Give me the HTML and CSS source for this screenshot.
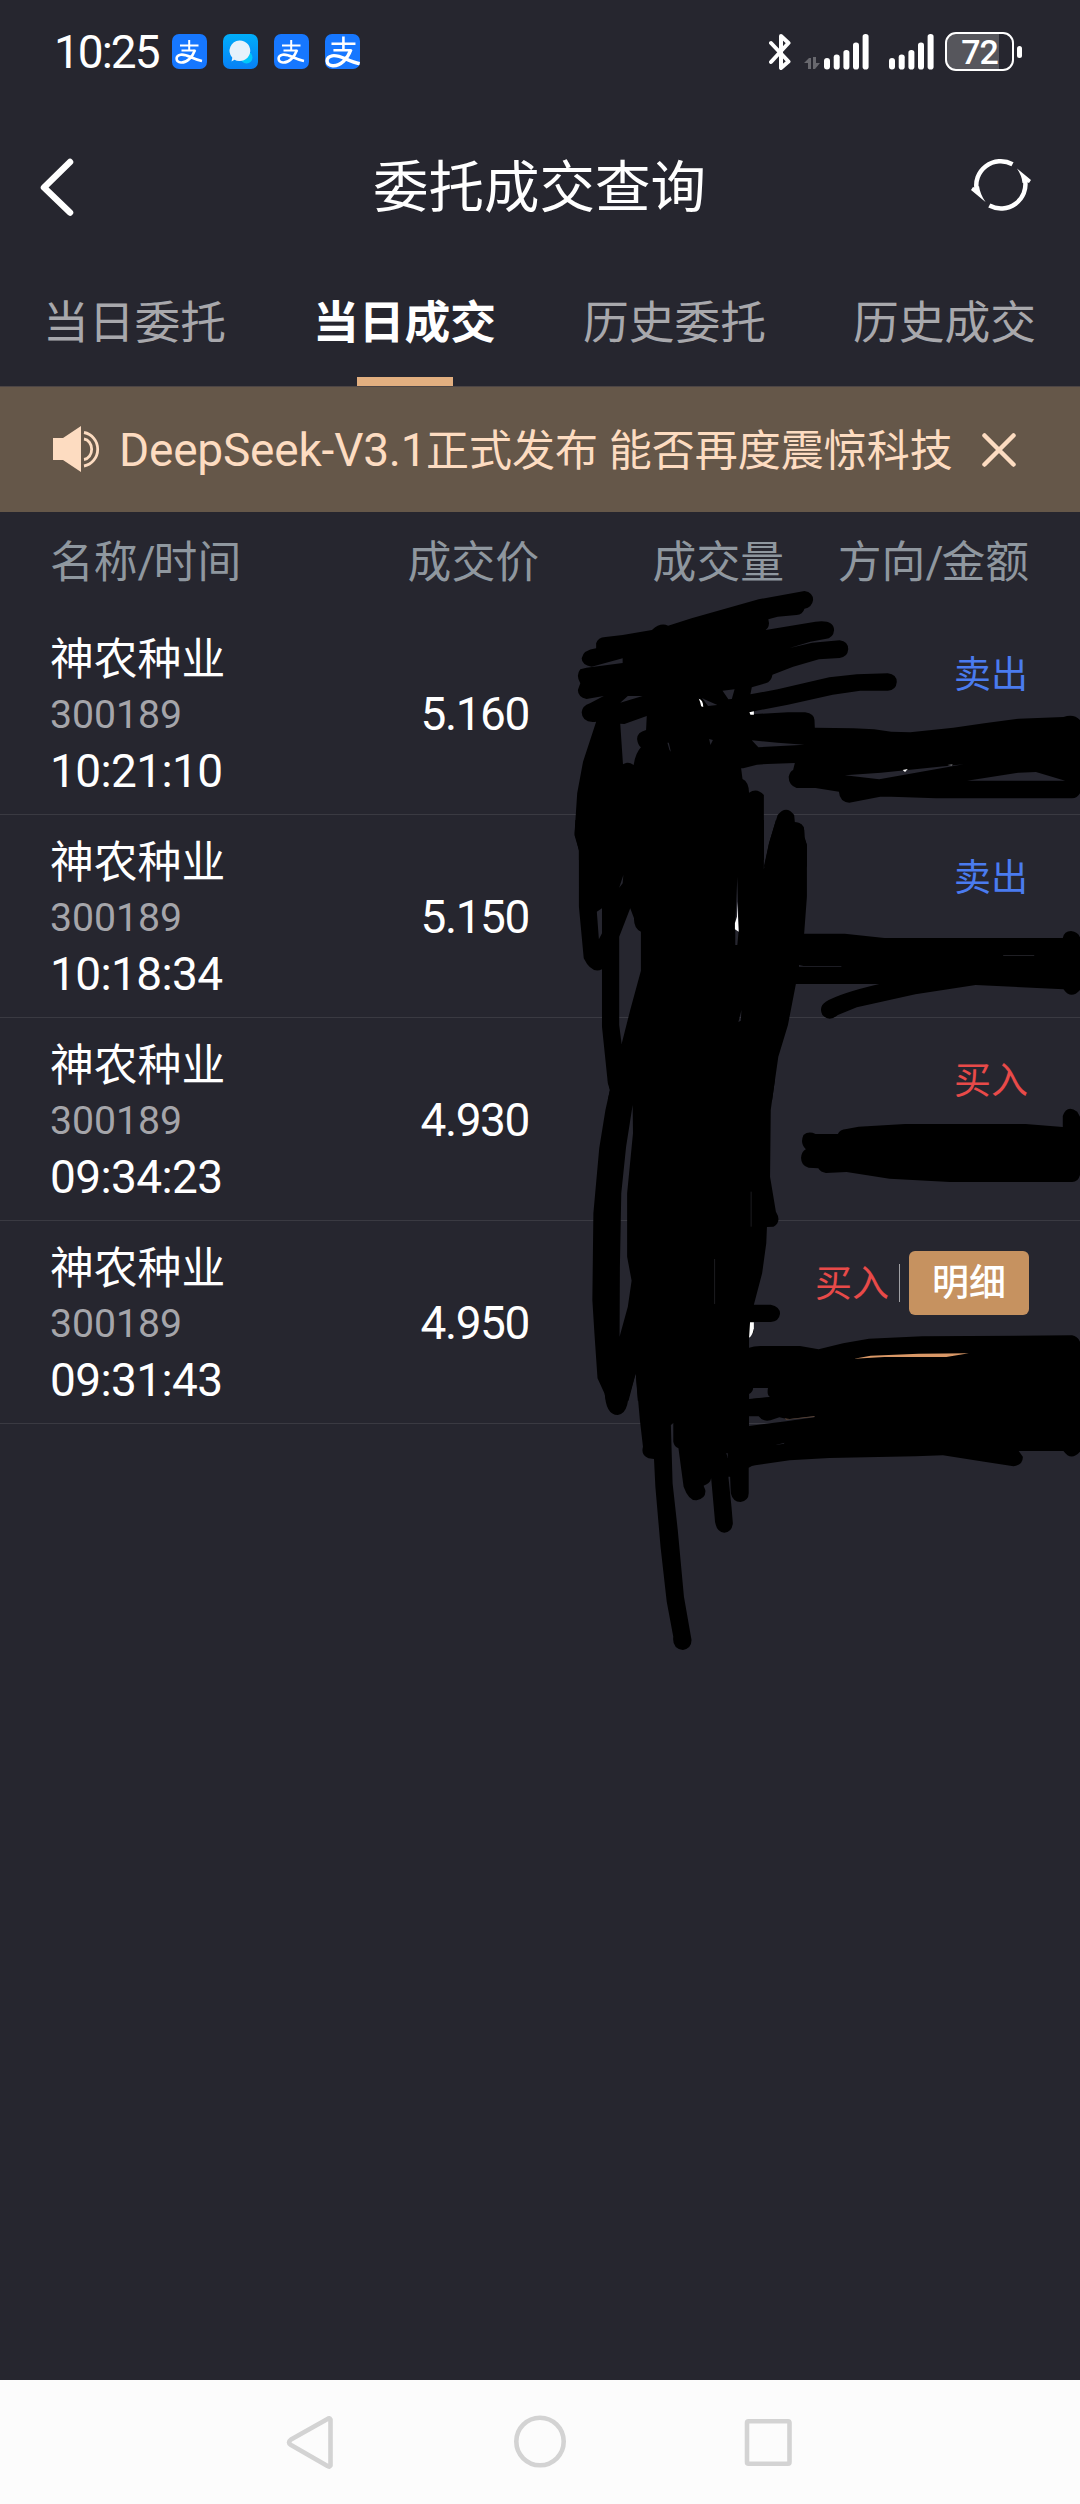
FILE: index.html
```html
<!DOCTYPE html>
<html lang="zh-CN">
<head>
<meta charset="utf-8">
<title>委托成交查询</title>
<link rel="stylesheet" href="styles.css">
</head>
<body>
<svg class="defs" width="0" height="0">
  <symbol id="alipay" viewBox="0 0 35 35">
    <g fill="none" stroke="#fff" stroke-linecap="butt">
      <path stroke-width="2" d="M8 11.500H26.500M17.200 6v10M9.500 16.500h14"/>
      <path stroke-width="2.600" d="M23 16C20.500 23 15 28.800 9 28.500C3.500 28 3 22 8.500 20.800C14.500 19.500 20 25 30 27"/>
    </g>
  </symbol>
  <symbol id="signal" viewBox="0 0 45 36">
    <g fill="#fff"><rect y="24" width="6" height="11.500" rx="3"/><rect x="9.700" y="20.500" width="6" height="15" rx="2.800"/><rect x="19.400" y="16" width="6" height="19.500" rx="2.800"/><rect x="29" y="8.500" width="6" height="27" rx="2.800"/><rect x="38.600" y="0" width="6" height="35.500" rx="2.800"/></g>
  </symbol>
</svg>
<div class="screen">
  <header class="status">
    <span class="clock">10:25</span>
    <div class="apps">
      <svg class="app blue" viewBox="0 0 35 35"><use href="#alipay"/></svg>
      <svg class="app chat" viewBox="0 0 35 35"><circle cx="23.500" cy="23.500" r="6" fill="#00c8fa"/><path fill="#e6f2fb" d="M16.500 6.500a10.500 10.300 0 1 1-5 19.200L8.500 27.500l.8-3.800A10.500 10.300 0 0 1 16.500 6.500z"/></svg>
      <svg class="app blue" viewBox="0 0 35 35"><use href="#alipay"/></svg>
      <svg class="app blue" viewBox="3 4 27 27"><use href="#alipay" width="35" height="35"/></svg>
    </div>
    <div class="indicators">
      <svg class="bt" viewBox="0 0 22 36"><path fill="none" stroke="#fff" stroke-width="4" stroke-linejoin="round" stroke-linecap="round" d="M2 9l17.500 18.500-7.500 6.500V2l7.500 7L2 28"/></svg>
      <svg class="data" viewBox="0 0 16 12"><path fill="#68686e" d="M0 6l5-5h2v11H4V6zM16 6l-5 6H9V0h3v6z"/></svg>
      <svg class="bars first"><use href="#signal"/></svg>
      <svg class="bars second"><use href="#signal"/></svg>
      <div class="battery"><span>72</span></div>
      <i class="nub"></i>
    </div>
  </header>

  <nav class="titlebar">
    <svg class="back" viewBox="0 0 36 60"><path fill="none" stroke="#fff" stroke-width="6.500" stroke-linecap="round" stroke-linejoin="round" d="M31 5L5 30.500 31 55.500"/></svg>
    <h1>委托成交查询</h1>
    <svg class="refresh" viewBox="0 0 60 54"><g fill="none" stroke="#fff" stroke-width="4.500"><path d="M41.500 5.200A24.500 24 0 0 0 6 32"/><path d="M18.300 46.600A24.500 24 0 0 0 54 21"/></g><path fill="#fff" d="M46 9.500L60 21l-2 3-2.500-1-4 1Q51 17 46 9.500zM14.500 43L0 31l2-3 2.500 1L8 27Q9 35 14.500 43z"/></svg>
  </nav>

  <div class="tabs">
    <span>当日委托</span><span class="active">当日成交</span><span>历史委托</span><span>历史成交</span>
  </div>

  <div class="notice">
    <svg class="horn" viewBox="0 0 47 46"><path fill="#fddcc1" d="M0 12h10L28 0v46L10 34H0z"/><path fill="none" stroke="#fddcc1" stroke-width="2.800" d="M31 6.500a16.500 17 0 0 1 0 33.500M31 13a8.500 10.300 0 0 1 0 20.500"/></svg>
    <p><span class="latin">DeepSeek-V3.1</span>正式发布 能否再度震惊科技</p>
    <svg class="close" viewBox="0 0 34 34"><path fill="none" stroke="#fddcc1" stroke-width="4.500" stroke-linecap="round" d="M2.500 2.500l29 29M31.500 2.500l-29 29"/></svg>
  </div>

  <div class="grid head">
    <span>名称<b>/</b>时间</span><span class="num">成交价</span><span class="num">成交量</span><span class="num">方向<b>/</b>金额</span>
  </div>

  <main class="deals">
    <div class="grid row">
      <div class="stock"><span>神农种业</span><span class="code">300189</span><span class="time">10:21:10</span></div>
      <span class="num price">5.160</span><span></span>
      <div class="side"><span class="sell">卖出</span></div>
    </div>
    <div class="grid row">
      <div class="stock"><span>神农种业</span><span class="code">300189</span><span class="time">10:18:34</span></div>
      <span class="num price">5.150</span><span></span>
      <div class="side"><span class="sell">卖出</span></div>
    </div>
    <div class="grid row">
      <div class="stock"><span>神农种业</span><span class="code">300189</span><span class="time">09:34:23</span></div>
      <span class="num price">4.930</span><span></span>
      <div class="side"><span class="buy">买入</span></div>
    </div>
    <div class="grid row">
      <div class="stock"><span>神农种业</span><span class="code">300189</span><span class="time">09:31:43</span></div>
      <span class="num price">4.950</span><span></span>
      <div class="side"><span class="buy">买入</span><i class="rule"></i><button class="detail">明细</button></div>
    </div>
  </main>

  <footer class="sysnav">
    <svg viewBox="0 0 60 60"><path fill="none" stroke="#d3d3d3" stroke-width="4.600" stroke-linejoin="round" d="M48.500 7.500v46q-1 2-3 .5L9 33q-4-2.500 0-5.500L45.500 7q2-1.500 3 .5z"/></svg>
    <svg viewBox="0 0 60 60"><circle cx="30" cy="29.500" r="23.700" fill="none" stroke="#d3d3d3" stroke-width="4.600"/></svg>
    <svg viewBox="0 0 60 60"><rect x="9" y="9.300" width="42.500" height="42.500" rx="1.500" fill="none" stroke="#d3d3d3" stroke-width="4.600"/></svg>
  </footer>

  <!-- black marker hiding volumes and amounts -->
  <svg class="marker" viewBox="0 0 1080 2504">
    <g transform="translate(540 580) scale(.34439 .33333)">
      <path fill-rule="evenodd" d="M163 190Q168 172 190 171L240 165 325 150Q350 126 372 137L440 115 635 58 768 33Q793 37 793 60Q790 82 768 86Q763 103 745 105L690 110 663 118 665 130Q664 145 655 150L800 125Q853 118 854 150Q852 175 828 177L785 185 725 204 790 188 870 181Q895 184 895 208Q893 232 870 234L810 238 735 260 675 284Q672 304 655 310L615 322 611 343 690 328 840 292 920 283 1010 280Q1036 284 1036 306Q1034 331 1010 332L930 332 850 344 720 374 625 393 610 403 720 397 770 397Q797 402 797 420L798 443 910 445 970 448 1020 455 1075 457 1200 443 1290 430 1390 416 1520 411Q1550 400 1568 420V640Q1560 655 1545 655H1150L1020 650H988L898 668Q870 665 868 635L800 624H745Q722 615 722 590Q727 572 735 570L740 549 660 552 630 554 590 565 584 565 588 597Q606 605 607 638Q630 622 650 645V840H113V810L100 765 108 640 125 545 163 425Q122 430 121 397Q122 378 145 370L185 348 135 357Q110 351 110 330L117 310Q103 286 117 268L135 263 240 249V235L150 260Q121 255 121 235Q125 210 163 205z
      M233 368L255 348H298zM233 431L245 432 310 408 308 450Q281 457 282 478Q284 495 293 502Q277 520 272 555Q255 543 241 553zM530 332L565 328 557 357 547 358zM470 354L482 360 515 375 488 378zM615 481L690 488 768 494 634 502zM885 586L990 578 1230 553 985 598zM1240 602L1390 578 1440 576 1525 602zM370 488L374 488 380 515 376 510zM491 477L502 480 495 495z"/>
      <path d="M650 860L665 790 690 705Q715 673 738 705L740 727Q765 730 767 750L768 770 775 795V860z"/>
      <path fill="#fff" d="M461 356Q474 360 474 381L468 379Q466 365 461 356zM608 397L621 394V404H611zM1053 570L1068 567 1060 576z"/>
      <path fill="#77777b" d="M1183 555L1198 553 1196 557z"/>
    </g>
    <g transform="translate(540 820) scale(.34439 .33333)">
      <path fill-rule="evenodd" d="M103 0H650V148L665 70 685 0 740 7Q765 7 767 30L768 55 775 75V230L767 341H885L1000 354H1518Q1522 333 1542 333Q1562 335 1568 352V510Q1542 540 1520 508L1265 495 1090 523 920 562 865 585Q840 607 820 585Q808 560 830 545Q870 520 985 492H743L720 615 692 710 674 840H197L203 810 197 790 180 620V448Q150 463 127 415L113 260V92L101 40z
      M165 275L180 265V340L171 358zM262 265L273 295Q272 325 293 335V452L262 570 237 672 230 615V350zM573 170L577 330 573 375H567V315zM585 570L583 602 576 606zM752 435L765 438H875V440H752zM242 165L240 190 230 203z"/>
      <path fill="#fff" d="M573 245L577 335 566 328V310L572 290z"/>
      <path fill="#303037" d="M1345 405H1435V407H1345z"/>
    </g>
    <g transform="translate(540 1080) scale(.34439 .33333)">
      <path fill-rule="evenodd" d="M197 0H682L670 90 668 290 685 395Q703 425 678 440L659 441 657 490 645 580 621 674H670Q697 680 697 701Q694 724 670 726H621V755L607 773V803Q620 798 640 798H755L809 808 880 790 955 776 1110 769 1545 766Q1560 768 1568 785V962H192L187 940 167 895 158 760 152 660 155 400 172 205 190 90 203 30z
      M269 75L270 160 253 340V530L266 602 255 680 231 770 232 560 236 340 250 200zM278 880L284 962H257zM619 924H662Q658 946 668 951L607 957V942Q618 936 619 924z"/>
      <path d="M765 165Q780 152 800 162H865Q870 148 890 147L925 140 1060 132H1410L1518 141V108Q1530 73 1560 95L1568 110V285Q1563 306 1545 306H1190L1015 296 890 276 830 279Q815 277 808 265L780 263Q758 257 758 233Q760 214 772 208Q754 190 765 165z"/>
      <path fill="#fff" d="M610 727H621V745Q617 768 607 773z"/>
      <path fill="#d99867" d="M912 836L960 827 1100 821 1245 820 1180 831H1000z"/>
      <path fill="none" stroke="#29292e" stroke-width="2" d="M507 537V672M613 335V440"/>
    </g>
    <g transform="translate(540 1300) scale(.34439 .33333)">
      <path d="M188 275Q190 345 226 345Q246 342 253 315L258 290 278 220H230z"/>
      <path fill-rule="evenodd" d="M278 220L290 360 299 440Q292 465 315 475L331 477 335 560 350 740 368 905 387 1010Q383 1045 415 1050Q440 1045 440 1020L418 890 400 690 385 550 380 375 387 370V425Q390 440 402 445L417 560Q432 603 455 601Q483 595 480 570L475 557Q495 550 497 535L507 650Q508 696 535 698Q557 697 560 670L556 620 547 530 552 530 554 580Q560 606 582 606Q606 602 606 580V503Q615 497 625 496L725 481 840 474 1090 469 1170 466 1290 485 1375 499Q1403 495 1402 470L1390 453H1520Q1542 485 1568 455V290H668V292L607 298V220zM607 349H635Q650 370 680 357L695 352 720 358 797 349V352L715 364 607 378zM541 459L545 460 545 474zM685 435L710 428 708 431z"/>
      <path fill="#5a4436" d="M710 355L725 357 797 348V351L715 359z"/>
    </g>
  </svg>
</div>
</body>
</html>
```
FILE: styles.css
```css
* { box-sizing: border-box; margin: 0; padding: 0; }
body { background: #26262f; font-family: Roboto, "Noto Sans CJK SC", sans-serif; color: #fff; }
svg { display: block; flex: none; }
.defs { position: absolute; }
.screen { position: relative; width: 1080px; height: 2504px; overflow: hidden; display: flex; flex-direction: column; background: #26262f; }

.status { height: 103px; padding-left: 54px; padding-right: 58px; display: flex; align-items: center; }
.clock { width: 118px; font-size: 46px; letter-spacing: -2px; line-height: 54px; white-space: nowrap; }
.apps { display: flex; gap: 16px; }
.app { width: 35px; height: 35px; border-radius: 7px; }
.blue { background: #1677ff; }
.chat { background: linear-gradient(#00aefa, #0780f5); }
.indicators { margin-left: auto; display: flex; align-items: center; }
.bt { width: 22px; height: 36px; }
.data { width: 16px; height: 12px; margin: 23px 4px 0 13px; }
.bars { width: 45px; height: 36px; }
.second { margin-left: 20px; }
.battery { width: 69px; height: 39px; margin-left: 11px; border: 2.500px solid #fff; border-radius: 11px; background: linear-gradient(90deg, #56565c 52px, transparent 52px); text-align: center; font-size: 34px; font-weight: 500; letter-spacing: -1px; line-height: 36px; }
.nub { width: 5px; height: 12px; margin-left: 3px; border-radius: 3px; background: #fff; }

.titlebar { height: 167px; padding: 0 48px 0 39px; display: grid; grid-template-columns: 62px 1fr 62px; align-items: center; }
.back { width: 36px; height: 60px; }
.titlebar h1 { font-size: 55.500px; font-weight: 400; line-height: 72px; text-align: center; padding: 4px 0 0 8px; }
.refresh { width: 62px; height: 54px; margin-top: -1px; }

.tabs { height: 116px; display: grid; grid-template-columns: repeat(4, 1fr); }
.tabs span { display: flex; flex-direction: column; align-items: center; justify-content: space-between; padding: 21px 1px 0 0; font-size: 45.800px; line-height: 66px; color: #a8a8ac; }
.tabs .active { color: #fff; font-weight: 700; }
.tabs .active::after { content: ""; width: 96px; height: 9px; background: #e2af80; }

.notice { height: 126px; padding: 0 64px 0 53px; border-top: 1px solid #4c4545; display: flex; align-items: center; background: #655749; color: #fddcc1; }
.horn { width: 47px; height: 46px; margin-top: -2px; }
.notice p { flex: 1; margin-left: 19px; padding-top: 2px; font-size: 43px; line-height: 60px; white-space: nowrap; }
.latin { display: inline-block; width: 307px; font-size: 46px; letter-spacing: -.2px; }
.close { width: 34px; height: 34px; }

.grid { display: grid; grid-template-columns: 290px 199px 245px 245px; padding-left: 50px; }
.num { text-align: right; }
.head { height: 99px; align-items: center; padding-top: 3px; font-size: 43.800px; line-height: 60px; color: #8f979f; white-space: nowrap; }
.head b { font-weight: 400; display: inline-block; width: 16px; text-align: center; }
.deals { flex: 1; }
.row { height: 203px; border-bottom: 1px solid #3a3a42; }
.row:first-child { height: 204px; padding-top: 1px; }
.stock { display: flex; flex-direction: column; padding-top: 21px; font-size: 43.800px; line-height: 55px; white-space: nowrap; }
.code { font-size: 39.200px; color: #a5a5aa; }
.time { font-size: 46px; letter-spacing: -.6px; padding-top: 1px; }
.price { font-size: 46px; letter-spacing: -1.400px; line-height: 55px; padding: 75px 10px 0 0; }
.side { height: 64px; margin-top: 30px; padding-bottom: 0; display: flex; align-items: center; justify-content: flex-end; font-size: 37px; line-height: 64px; }
.sell, .buy { padding: 3px 1px 0 0; }
.sell { color: #4a7bef; }
.buy { color: #e84a49; }
.rule { width: 1px; height: 38px; margin: 0 9px 0 9px; background: #a0a0a4; }
.detail { width: 120px; height: 64px; padding-top: 2px; border: 0; border-radius: 6px; background: #c69260; color: #fff; font: 500 37px/62px Roboto, "Noto Sans CJK SC", sans-serif; }

.sysnav { height: 124px; background: #fcfcfc; display: flex; justify-content: center; gap: 168px; padding-top: 32px; }
.sysnav svg { width: 60px; height: 60px; }
.marker { position: absolute; inset: 0; width: 1080px; height: 2504px; pointer-events: none; }
```
